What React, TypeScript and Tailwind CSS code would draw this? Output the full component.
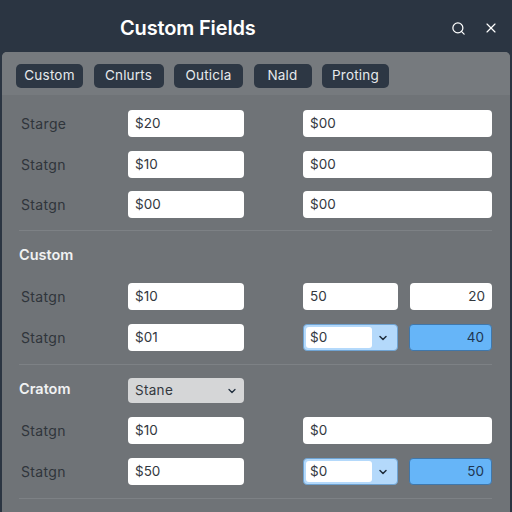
import { ChevronDown, Search, X } from "lucide-react";
import type { ReactNode } from "react";

const tabs = [
  { label: "Custom", width: "w-[67px]" },
  { label: "Cnlurts", width: "w-[70px]" },
  { label: "Outicla", width: "w-[69px]" },
  { label: "Nald", width: "w-[58px]" },
  { label: "Proting", width: "w-[67px]" },
];

function Field({ value, className = "" }: { value: string; className?: string }) {
  return (
    <div className={`flex h-[27px] items-center rounded-[4px] bg-white px-[7px] text-[13.5px] text-[#33383e] ${className}`}>
      {value}
    </div>
  );
}

function ComboField({ value }: { value: string }) {
  return (
    <div className="flex h-[27px] w-[95px] items-center justify-between rounded-[4px] border border-[#6fa3d2] bg-[#b4d9fb] p-[2px] pr-[8px] text-[13.5px] text-[#33383e]">
      <span className="flex h-full w-[66px] items-center rounded-[3px] bg-white pl-[4px]">{value}</span>
      <ChevronDown className="h-[12px] w-[12px] text-[#1f2d3d]" strokeWidth={3} />
    </div>
  );
}

function BlueField({ value }: { value: string }) {
  return (
    <div className="flex h-[27px] w-[83px] items-center justify-end rounded-[4px] border border-[#3f77ab] bg-[#66b5f8] px-[7px] text-[13.5px] text-[#1f3650]">
      {value}
    </div>
  );
}

function SplitRow({ label, value, right }: { label: string; value: string; right: ReactNode }) {
  return (
    <div className="flex items-center">
      <span className="w-[109px] pl-[2px] text-[14px] tracking-[0.35px] text-[#2f353b]">{label}</span>
      <Field value={value} className="w-[116px]" />
      <div className="ml-[59px] flex w-[189px] shrink-0 items-center justify-between">{right}</div>
    </div>
  );
}

function Divider() {
  return <div className="h-px w-full bg-[#7d8185]" />;
}

export default function App() {
  return (
    <div className="flex h-[512px] w-[512px] flex-col overflow-hidden bg-[#2b3542] font-['Inter',sans-serif]">
      <header className="flex h-[52px] shrink-0 items-center pl-[120px] pr-[13px] pt-[4px]">
        <h1 className="flex-1 text-[20px] font-semibold tracking-[-0.15px] text-white">Custom Fields</h1>
        <Search className="mr-[17px] h-[15px] w-[15px] text-white" strokeWidth={2} />
        <X className="h-[16px] w-[16px] text-white" strokeWidth={1.75} />
      </header>

      <main className="mx-[2px] flex-1 rounded-t-[5px] bg-[#6f7377]">
        <nav className="flex h-[43px] items-center gap-[10.5px] rounded-t-[5px] bg-[#767a7e] pl-[14px] pt-[4px]">
          {tabs.map((tab) => (
            <span
              key={tab.label}
              className={`flex h-[24px] items-center justify-center rounded-[5px] bg-[#2d3744] text-[13.5px] tracking-[0.2px] text-[#e6e9ec] ${tab.width}`}
            >
              {tab.label}
            </span>
          ))}
        </nav>

        <div className="pl-[17px] pr-[18px] pt-[15px]">
          <div className="flex flex-col gap-[13.5px]">
            <SplitRow label="Starge" value="$20" right={<Field value="$00" className="w-full" />} />
            <SplitRow label="Statgn" value="$10" right={<Field value="$00" className="w-full" />} />
            <SplitRow label="Statgn" value="$00" right={<Field value="$00" className="w-full" />} />
          </div>
          <div className="mt-[12px]">
            <Divider />
          </div>

          <h2 className="mt-[14px] text-[14.5px] font-semibold leading-[20px] text-[#f1f2f3]">Custom</h2>

          <div className="mt-[18px] flex flex-col gap-[14px]">
            <SplitRow
              label="Statgn"
              value="$10"
              right={
                <>
                  <Field value="50" className="w-[95px]" />
                  <Field value="20" className="w-[82px] justify-end" />
                </>
              }
            />
            <SplitRow
              label="Statgn"
              value="$01"
              right={
                <>
                  <ComboField value="$0" />
                  <BlueField value="40" />
                </>
              }
            />
          </div>
          <div className="mt-[13px]">
            <Divider />
          </div>

          <div className="mt-[13px] flex items-center">
            <h2 className="mb-[3px] w-[109px] text-[14.5px] font-semibold text-[#f1f2f3]">Cratom</h2>
            <div className="flex h-[25px] w-[116px] items-center justify-between rounded-[4px] bg-[#d5d6d7] pl-[7px] pr-[6px] text-[13.5px] tracking-[0.3px] text-[#33383e]">
              Stane
              <ChevronDown className="h-[12px] w-[12px] text-[#1f2d3d]" strokeWidth={2.5} />
            </div>
          </div>

          <div className="mt-[14px] flex flex-col gap-[14px]">
            <SplitRow label="Statgn" value="$10" right={<Field value="$0" className="w-full" />} />
            <SplitRow
              label="Statgn"
              value="$50"
              right={
                <>
                  <ComboField value="$0" />
                  <BlueField value="50" />
                </>
              }
            />
          </div>
          <div className="mt-[13px]">
            <Divider />
          </div>
        </div>
      </main>
    </div>
  );
}
